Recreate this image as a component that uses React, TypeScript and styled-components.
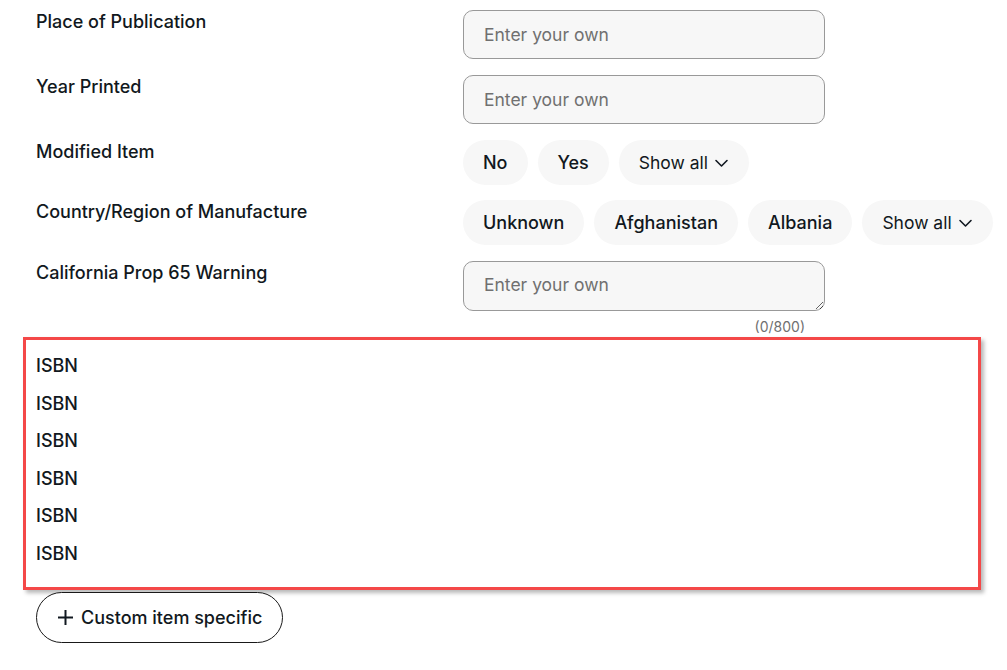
import React from "react";
import styled, { createGlobalStyle } from "styled-components";

const GlobalStyle = createGlobalStyle`
    body {
        margin: 0;
        background: #fff;
        color: #111820;
        font-family: Inter, "Open Sans", Arial, sans-serif;
    }
`;

const Page = styled.div`
    width: 1007px;
    padding-top: 10px;
`;

const Row = styled.div<{ $gap?: number }>`
    display: grid;
    grid-template-columns: 427px 1fr;
    padding-left: 36px;
    margin-bottom: ${(p) => (p.$gap ?? 16)}px;
`;

const Label = styled.div`
    font-size: 18px;
    font-weight: 500;
    line-height: 22px;
    padding-top: 1px;
`;

const TextInput = styled.input`
    box-sizing: border-box;
    width: 362px;
    height: 49px;
    padding: 0 20px;
    border: 1px solid #999;
    border-radius: 10px;
    background: #f7f7f7;
    font-family: inherit;
    font-size: 17.5px;
    color: #111820;
    outline: none;

    &::placeholder {
        color: #707070;
    }
`;

const TextArea = styled.textarea`
    box-sizing: border-box;
    display: block;
    width: 362px;
    height: 50px;
    padding: 12px 20px;
    border: 1px solid #999;
    border-radius: 10px;
    background: #f7f7f7;
    font-family: inherit;
    font-size: 17.5px;
    line-height: 22px;
    resize: vertical;
    outline: none;

    &::placeholder {
        color: #707070;
    }
`;

const Counter = styled.div`
    width: 362px;
    box-sizing: border-box;
    padding-right: 20px;
    text-align: right;
    font-size: 14px;
    line-height: 18px;
    margin-top: 7px;
    color: #707070;
`;

const Chips = styled.div`
    display: flex;
    flex-wrap: nowrap;
    gap: 10px;
`;

const Chip = styled.button<{ $plain?: boolean }>`
    display: inline-flex;
    align-items: center;
    gap: 6px;
    height: 45px;
    padding: 0 20px;
    border: none;
    border-radius: 23px;
    background: #f7f7f7;
    font-family: inherit;
    font-size: ${(p) => (p.$plain ? 17.5 : 18)}px;
    font-weight: ${(p) => (p.$plain ? 400 : 500)};
    color: #111820;
    white-space: nowrap;
    cursor: pointer;
`;

const Highlight = styled.div`
    margin: 0 26px 0 23px;
    border: 3px solid #f44848;
    box-shadow: 3px 3px 4px rgba(0, 0, 0, 0.28);
    padding: 15px 10px 22px;
    display: flex;
    flex-direction: column;
    gap: 15.5px;
`;

const Spec = styled.div`
    font-size: 18px;
    font-weight: 500;
    line-height: 22px;
`;

const AddButton = styled.button`
    margin: 2px 0 0 36px;
    display: inline-flex;
    align-items: center;
    gap: 7px;
    height: 51px;
    padding: 0 20px;
    border: 1px solid #191919;
    border-radius: 26px;
    background: #fff;
    font-family: inherit;
    font-size: 18px;
    font-weight: 500;
    color: #111820;
    cursor: pointer;
`;

const Chevron = () => (
    <svg width="15" height="14" viewBox="0 0 15 14" fill="none">
        <path d="M2 4.5l5.5 5.5 5.5-5.5" stroke="#111820" strokeWidth="1.6" strokeLinecap="round" strokeLinejoin="round" />
    </svg>
);

const Plus = () => (
    <svg width="17" height="17" viewBox="0 0 17 17" fill="none">
        <path d="M8.5 1v15M1 8.5h15" stroke="#111820" strokeWidth="2" />
    </svg>
);

export default function App() {
    return (
        <Page>
            <GlobalStyle />
            <Row>
                <Label>Place of Publication</Label>
                <TextInput placeholder="Enter your own" />
            </Row>
            <Row>
                <Label>Year Printed</Label>
                <TextInput placeholder="Enter your own" />
            </Row>
            <Row $gap={15}>
                <Label>Modified Item</Label>
                <Chips>
                    <Chip>No</Chip>
                    <Chip>Yes</Chip>
                    <Chip $plain>
                        Show all <Chevron />
                    </Chip>
                </Chips>
            </Row>
            <Row>
                <Label>Country/Region of Manufacture</Label>
                <Chips>
                    <Chip>Unknown</Chip>
                    <Chip>Afghanistan</Chip>
                    <Chip>Albania</Chip>
                    <Chip $plain>
                        Show all <Chevron />
                    </Chip>
                </Chips>
            </Row>
            <Row $gap={1}>
                <Label>California Prop 65 Warning</Label>
                <div>
                    <TextArea placeholder="Enter your own" />
                    <Counter>(0/800)</Counter>
                </div>
            </Row>
            <Highlight>
                {Array.from({ length: 6 }).map((_, i) => (
                    <Spec key={i}>ISBN</Spec>
                ))}
            </Highlight>
            <AddButton>
                <Plus />
                Custom item specific
            </AddButton>
        </Page>
    );
}
